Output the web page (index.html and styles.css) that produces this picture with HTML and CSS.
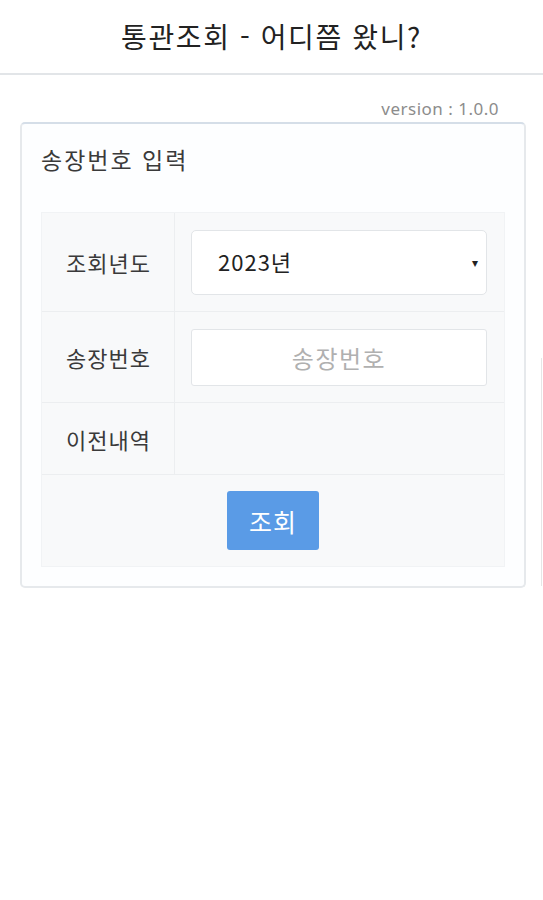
FILE: index.html
```html
<!DOCTYPE html>
<html lang="ko">
<head>
<meta charset="utf-8">
<title>통관조회 - 어디쯤 왔니?</title>
<link rel="stylesheet" href="styles.css">
</head>
<body>
<header class="topbar"><h1 class="title">통관조회 - 어디쯤 왔니?</h1></header>
<div class="version">version : 1.0.0</div>
<section class="card">
  <h2 class="card-title">송장번호 입력</h2>
  <div class="form-table">
    <div class="row row-year">
      <div class="label">조회년도</div>
      <div class="field">
        <div class="select"><span>2023년</span><span class="caret">▾</span></div>
      </div>
    </div>
    <div class="row row-no">
      <div class="label">송장번호</div>
      <div class="field">
        <div class="input">송장번호</div>
      </div>
    </div>
    <div class="row row-hist">
      <div class="label">이전내역</div>
      <div class="field"></div>
    </div>
    <div class="row-btn">
      <button class="btn">조회</button>
    </div>
  </div>
</section>
<div class="scroll-hint"></div>
</body>
</html>
```
FILE: styles.css
```css
* { box-sizing: border-box; }
html, body { margin: 0; padding: 0; background: #fff; }
body {
  width: 543px;
  height: 900px;
  position: relative;
  font-family: "Noto Sans CJK KR", "Noto Sans", sans-serif;
  color: #333;
}
.topbar {
  height: 75px;
  border-bottom: 2px solid #e2e5e8;
  display: flex;
  align-items: center;
  justify-content: center;
}
.title {
  margin: 0;
  font-size: 28px;
  font-weight: 400;
  color: #222;
  letter-spacing: 1.6px;
  padding-bottom: 2px;
}
.version {
  text-align: right;
  padding-right: 44px;
  margin-top: 21px;
  height: 26px;
  font-family: "Noto Sans", sans-serif;
  font-size: 17px;
  letter-spacing: 0.5px;
  line-height: 26px;
  color: #8c8c8c;
}
.card {
  margin-left: 20px;
  width: 506px;
  height: 466px;
  border: 2px solid #e6e9ec;
  border-top-color: #d5dee8;
  border-radius: 5px;
  background: #fdfeff;
  padding: 0 19px;
}
.card-title {
  margin: 0;
  height: 88px;
  padding-top: 18px;
  font-size: 23px;
  font-weight: 400;
  letter-spacing: 2px;
  line-height: 34px;
  color: #3a3a3a;
}
.form-table {
  background: #f8f9fa;
  border: 1px solid #f1f3f5;
}
.row {
  display: grid;
  grid-template-columns: 133px 1fr;
  border-bottom: 1px solid #eceef0;
}
.row-year { height: 99px; }
.row-no { height: 91px; }
.row-hist { height: 72px; }
.label {
  border-right: 1px solid #eceef0;
  display: flex;
  align-items: center;
  padding-left: 24px;
  font-size: 22px;
  letter-spacing: 1px;
  color: #3a3a3a;
}
.field {
  display: flex;
  align-items: center;
  padding: 0 17px 0 16px;
}
.select {
  width: 296px;
  height: 65px;
  background: #fff;
  border: 1px solid #e2e5e8;
  border-radius: 5px;
  display: flex;
  align-items: center;
  justify-content: space-between;
  padding: 0 8px 2px 26px;
  font-size: 22px;
  letter-spacing: 1px;
  color: #222;
}
.caret { font-size: 12px; color: #222; letter-spacing: 0; }
.input {
  width: 296px;
  height: 57px;
  background: #fff;
  border: 1px solid #e2e5e8;
  border-radius: 3px;
  display: flex;
  align-items: center;
  justify-content: center;
  font-size: 24px;
  letter-spacing: 1.5px;
  color: #b0b0b0;
}
.row-btn {
  height: 91px;
  display: flex;
  justify-content: center;
  padding-top: 16px;
}
.btn {
  width: 92px;
  height: 59px;
  border: none;
  border-radius: 3px;
  background: #5a9be6;
  color: #fff;
  font-family: "Noto Sans CJK KR", sans-serif;
  font-size: 25px;
  letter-spacing: 1px;
  padding: 0;
}
.scroll-hint {
  position: absolute;
  left: 541px;
  top: 358px;
  width: 1px;
  height: 228px;
  background: #e6e6e6;
}
```
